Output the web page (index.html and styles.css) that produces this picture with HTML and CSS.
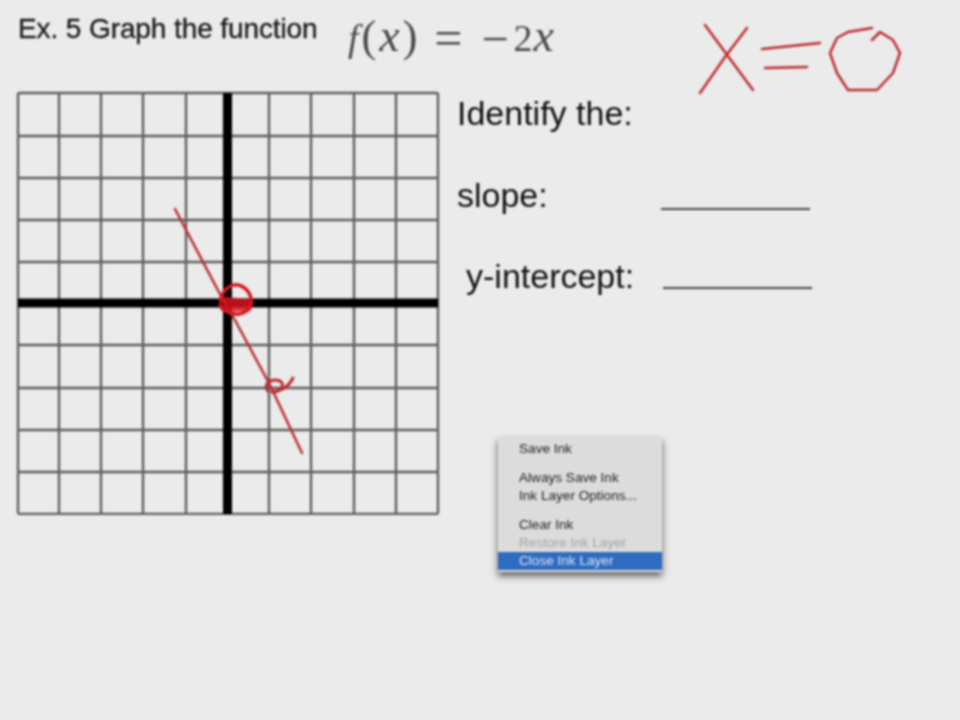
FILE: index.html
```html
<!DOCTYPE html>
<html lang="en">
<head>
<meta charset="utf-8">
<title>Graph the function</title>
<link rel="stylesheet" href="styles.css">
</head>
<body>
<main class="slide">
  <header class="heading">
    <h1 class="title">Ex. 5 Graph the function</h1>
    <p class="formula"><i>f</i><span class="paren">(</span><i class="var">x</i><span class="paren">)</span><span class="equals">=</span><span class="minus">−</span><span class="digit">2</span><i class="var">x</i></p>
  </header>
  <section class="content">
    <svg class="graph" width="424" height="424" viewBox="16 91 424 424" aria-label="Coordinate grid">
      <rect x="18" y="93" width="420" height="421" rx="2" fill="none" stroke="#5e5e5e" stroke-width="2.400"/>
      <path fill="none" stroke="#5e5e5e" stroke-width="2.400" d="M59 93V514M101 93V514M143 93V514M186 93V514M269 93V514M311 93V514M354 93V514M396 93V514M18 136H438M18 178H438M18 220H438M18 262H438M18 345H438M18 388H438M18 430H438M18 472H438"/>
      <path fill="none" stroke="#000" stroke-width="9" d="M227.500 93V514M18 303H438"/>
    </svg>
    <div class="questions">
      <p class="prompt">Identify the:</p>
      <div class="answer slope"><span class="label">slope:</span><span class="blank"></span></div>
      <div class="answer intercept"><span class="label">y-intercept:</span><span class="blank"></span></div>
    </div>
  </section>
  <svg class="ink" width="960" height="720" viewBox="0 0 960 720" aria-hidden="true">
    <g fill="none" stroke="#bc2c32" stroke-width="2.500" stroke-linecap="round" stroke-linejoin="round">
      <path d="M705 25L753 90M747 28L725 57L700 93"/>
      <path d="M762 49L820 43M765 68L807 67"/>
      <path d="M872 28L848 32L837 38L830 53L837 73L848 90L877 90L893 73L900 53L893 40L880 32L872 40"/>
      <path d="M175 209L221 296L236 322L270 385L302 453"/>
      <path d="M221 298C224 288 232 284 238 285C247 287 252 295 251 303C250 311 242 315 235 314C228 313 222 310 220 305" stroke="#d01a20" stroke-width="3.500"/>
      <path d="M222 300L250 303M224 308L248 308" stroke="#d8141c" stroke-opacity="0.85" stroke-width="7"/>
      <path d="M268 391C262 383 272 378 280 381C286 385 280 392 272 392C279 392 288 388 293 378" stroke-width="3"/>
    </g>
  </svg>
  <nav class="menu">
    <div class="menu-group">
      <span class="item">Save Ink</span>
    </div>
    <div class="menu-group">
      <span class="item">Always Save Ink</span>
      <span class="item">Ink Layer Options...</span>
    </div>
    <div class="menu-group">
      <span class="item">Clear Ink</span>
      <span class="item disabled">Restore Ink Layer</span>
      <span class="item active">Close Ink Layer</span>
    </div>
  </nav>
</main>
</body>
</html>
```
FILE: styles.css
```css
* {
  box-sizing: border-box;
  margin: 0;
  padding: 0;
}

html,
body {
  width: 960px;
  height: 720px;
  overflow: hidden;
  background: #ebebeb;
}

body {
  font-family: "Liberation Sans", Arial, sans-serif;
  color: #1c1c1c;
}

.slide {
  position: relative;
  width: 960px;
  height: 720px;
  padding: 12px 0 0 18px;
  filter: blur(0.9px);
}

.heading {
  display: flex;
  align-items: center;
  height: 50px;
}

.title {
  width: 330px;
  font-size: 28px;
  font-weight: 400;
  letter-spacing: -0.1px;
  line-height: 34px;
  margin-bottom: 16px;
  color: #181818;
  -webkit-text-stroke: 0.3px #181818;
}

.formula {
  font-family: "Liberation Serif", "Times New Roman", serif;
  font-size: 38px;
  line-height: 50px;
  color: #484848;
  white-space: nowrap;
  letter-spacing: 3px;
}

.var {
  font-size: 46px;
}

.paren {
  margin: 0;
  font-size: 44px;
}

.equals {
  margin: 0 19px 0 14px;
  font-size: 50px;
  letter-spacing: 0;
  vertical-align: -4px;
}

.minus {
  margin-right: 5px;
  font-size: 48px;
  letter-spacing: 0;
  vertical-align: -4px;
}

.digit {
  margin-right: 0;
  letter-spacing: 1px;
}

.content {
  display: flex;
  margin: 29px 0 0 -2px;
}

.graph {
  display: block;
  flex: none;
}

.questions {
  display: flex;
  flex-direction: column;
  padding: 4px 0 0 17px;
  font-size: 34px;
  line-height: 36px;
  color: #111;
}

.answer {
  display: flex;
  align-items: flex-end;
}

.slope {
  margin-top: 46px;
}

.intercept {
  margin: 45px 0 0 9px;
}

.slope .label {
  width: 204px;
}

.intercept .label {
  width: 197px;
}

.blank {
  width: 149px;
  height: 2px;
  margin-bottom: 3px;
  background: #444;
}

.intercept .blank {
  margin-bottom: 5px;
}

.ink {
  position: absolute;
  top: 0;
  left: 0;
}

.menu {
  position: absolute;
  top: 437px;
  left: 498px;
  width: 164px;
  height: 135px;
  padding-top: 3px;
  display: flex;
  flex-direction: column;
  gap: 11px;
  background: #dcdcdc;
  font-size: 13.600px;
  line-height: 18px;
  color: #222;
  box-shadow: 0 4px 7px rgba(0, 0, 0, 0.6);
}

.menu-group {
  display: flex;
  flex-direction: column;
}

.item {
  display: block;
  height: 18px;
  padding-left: 21px;
}

.disabled {
  color: #a4a4a4;
}

.active {
  background: #2f6cc0;
  color: #dbe6f5;
}
```
